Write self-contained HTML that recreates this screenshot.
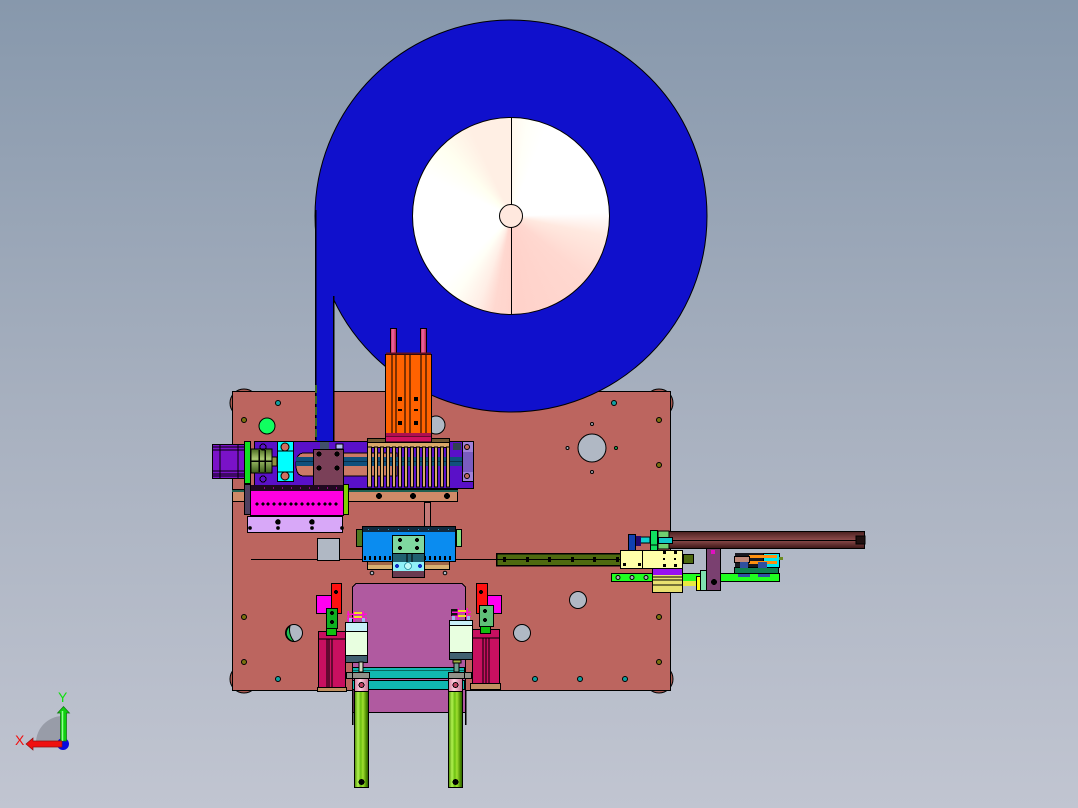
<!DOCTYPE html>
<html><head><meta charset="utf-8"><style>
html,body{margin:0;padding:0;width:1078px;height:808px;overflow:hidden}
svg{position:absolute;left:0;top:0}
</style></head><body>
<svg width="1078" height="808" viewBox="0 0 1078 808" shape-rendering="crispEdges" style="font-family:'Liberation Sans',sans-serif">
<defs>
<linearGradient id="bg" x1="0" y1="0" x2="0" y2="1"><stop offset="0" stop-color="#8798ac"/><stop offset=".5" stop-color="#a7b0bf"/><stop offset="1" stop-color="#c1c5d1"/></linearGradient>
<linearGradient id="tube" x1="0" y1="0" x2="0" y2="1"><stop offset="0" stop-color="#4a2020"/><stop offset=".5" stop-color="#8e4c4c"/><stop offset="1" stop-color="#3a1515"/></linearGradient>
<linearGradient id="gt" x1="0" y1="0" x2="1" y2="0"><stop offset="0" stop-color="#4a8a00"/><stop offset=".25" stop-color="#b0f050"/><stop offset=".45" stop-color="#6cc010"/><stop offset=".6" stop-color="#a0e030"/><stop offset=".85" stop-color="#4a8a00"/><stop offset="1" stop-color="#2a5a00"/></linearGradient>
<linearGradient id="cp" x1="0" y1="0" x2="0" y2="1"><stop offset="0" stop-color="#4a6a20"/><stop offset=".4" stop-color="#a8c870"/><stop offset="1" stop-color="#3a5a18"/></linearGradient>
<linearGradient id="pk" x1="0" y1="0" x2="1" y2="0"><stop offset="0" stop-color="#d880a0"/><stop offset=".4" stop-color="#ffd0e0"/><stop offset="1" stop-color="#c87090"/></linearGradient>
<linearGradient id="rd" x1="0" y1="0" x2="1" y2="0"><stop offset="0" stop-color="#c8205a"/><stop offset=".4" stop-color="#f070a0"/><stop offset="1" stop-color="#b01050"/></linearGradient>
</defs>
<rect width="1078" height="808" fill="url(#bg)"/>

<!-- feet -->
<g fill="#a85a52" stroke="#000" shape-rendering="auto"><circle cx="659" cy="403" r="14"/><circle cx="659" cy="679" r="14"/><circle cx="244" cy="403" r="14"/><circle cx="244" cy="679" r="14"/></g>
<!-- plate -->
<rect x="232.5" y="391.5" width="438" height="299" fill="#bc655f" stroke="#000"/>
<!-- plate holes -->
<g stroke="#000" fill="#b0b8c4" shape-rendering="auto">
<circle cx="592" cy="448" r="14"/><circle cx="578" cy="600" r="8.5"/><circle cx="522" cy="633" r="8.5"/><circle cx="294" cy="633" r="8.5"/><circle cx="436" cy="425" r="9"/>
<circle cx="267" cy="426" r="8" fill="#10ff60"/>
<circle cx="592" cy="424" r="1.5"/><circle cx="592" cy="472" r="1.5"/><circle cx="567.5" cy="448" r="1.5"/><circle cx="616" cy="448" r="1.5" fill="#20c060"/>
<path d="M290 626A8.5 8.5 0 0 0 294 641.5Q288 634 290 626Z" fill="#20c050"/>
<circle cx="372" cy="573" r="1.8"/><circle cx="445" cy="573" r="1.8"/>
</g>
<g stroke="#000" fill="#7a7010" shape-rendering="auto">
<circle cx="659" cy="420" r="2.5"/><circle cx="659" cy="465" r="2.5"/><circle cx="659" cy="617" r="2.5"/><circle cx="659" cy="662" r="2.5"/>
<circle cx="244" cy="420" r="2.5"/><circle cx="244" cy="617" r="2.5"/><circle cx="244" cy="662" r="2.5"/>
</g>
<g stroke="#000" fill="#10a0a0" shape-rendering="auto">
<circle cx="614" cy="403" r="2.5"/><circle cx="278" cy="403" r="2.5"/><circle cx="625" cy="679" r="2.5"/><circle cx="580" cy="679" r="2.5"/><circle cx="535" cy="679" r="2.5"/><circle cx="278" cy="679" r="2.5"/>
</g>
<line x1="251" y1="559.5" x2="497" y2="559.5" stroke="#000"/>

<!-- big disc -->
<circle cx="511" cy="216" r="196" fill="#1010cc" stroke="#000" shape-rendering="auto"/>
<!-- belt -->
<rect x="315.5" y="210" width="18" height="232" fill="#1010cc"/>
<path d="M315.5 210V442M333.5 296V442" stroke="#000" stroke-width="1.5" fill="none"/>
<path d="M316 385V470" stroke="#3a6a20" stroke-width="2" stroke-dasharray="8 3" fill="none"/>

<!-- inner disc -->
<foreignObject x="412" y="117" width="198" height="198">
<div xmlns="http://www.w3.org/1999/xhtml" style="width:196px;height:196px;border:1px solid #000;border-radius:50%;background:conic-gradient(from 0deg,#fff8ee 0deg,#fffff8 10deg,#fff 22deg,#fff 88deg,#ffe9e0 102deg,#ffd8d0 130deg,#ffd2ca 175deg,#ffd8d0 190deg,#ffeee6 200deg,#fffff6 215deg,#fff 225deg,#fff 295deg,#fffff0 315deg,#ffefe4 335deg,#ffefe4 360deg)"></div>
</foreignObject>
<path d="M511.5 118V314" stroke="#000"/>
<circle cx="511" cy="216" r="11.5" fill="#ffe8de" stroke="#000" shape-rendering="auto"/>

<!-- purple base -->
<rect x="254.5" y="441.5" width="219" height="47" fill="#5a10c8" stroke="#000"/>
<path d="M304 453H397V476H304Q296 476 296 465Q296 453 304 453Z" fill="#cc7a66" stroke="#000"/>
<rect x="296" y="457" width="166" height="9" fill="#10507c"/>
<path d="M296 461.5H462" stroke="#08304c"/>
<rect x="462.5" y="441.5" width="11" height="40" fill="#7a5cc0" stroke="#000"/>
<rect x="463" y="442" width="10" height="10" fill="#a080d8"/>
<rect x="463" y="472" width="10" height="9" fill="#a080d8"/>
<g stroke="#000" fill="#c06a60" shape-rendering="auto"><circle cx="467" cy="447" r="2.5"/><circle cx="467" cy="476" r="2.5"/></g>
<rect x="453" y="443" width="8" height="7" fill="#304050"/>
<!-- motor -->
<rect x="212.5" y="444.5" width="32" height="34" fill="#7a12c8" stroke="#000"/>
<path d="M212 447H244M212 450H244M212 471H244M212 474H244M212 476H244M220 444V478M238 444V478" stroke="#000" fill="none"/>
<rect x="244.5" y="441.5" width="6" height="42" fill="#10e020" stroke="#000"/>
<rect x="251" y="449" width="21" height="24" fill="url(#cp)" stroke="#000"/>
<path d="M259 450V472M265 450V472M251 461H272" stroke="#000" stroke-width="1.5"/>
<rect x="272" y="457" width="5" height="9" fill="#909040" stroke="#000"/>
<circle cx="263" cy="447" r="3" fill="none" stroke="#000"/><circle cx="263" cy="479" r="3" fill="none" stroke="#000"/>
<!-- cyan block -->
<rect x="277.5" y="441.5" width="16" height="40" fill="#00ffff" stroke="#000"/>
<g stroke="#000" fill="#d07060" shape-rendering="auto"><circle cx="285" cy="447" r="4"/><circle cx="285" cy="476" r="4"/></g>
<path d="M277 451H293M277 472H293" stroke="#000"/>
<!-- brown block -->
<rect x="313.5" y="449.5" width="30" height="37" fill="#7a4058" stroke="#000"/>
<g fill="#000"><circle cx="319" cy="454" r="2.5"/><circle cx="337" cy="454" r="2.5"/><circle cx="319" cy="468" r="2.5"/><circle cx="337" cy="468" r="2.5"/></g>
<rect x="336" y="444" width="7" height="5" fill="#b0b8f0" stroke="#000"/>
<rect x="320" y="442" width="9" height="7" fill="#40506a"/>

<!-- orange cylinder -->
<rect x="390.5" y="328.5" width="6" height="27" fill="url(#rd)" stroke="#000"/>
<rect x="420.5" y="328.5" width="6" height="27" fill="url(#rd)" stroke="#000"/>
<rect x="385.5" y="354.5" width="46" height="81" fill="#ff6200" stroke="#000"/>
<path d="M392 355V435M396 355V435M405 355V435M410 355V435M421 355V435M426 355V435" stroke="#000"/>
<path d="M386 353.5H431" stroke="#601020" stroke-width="2"/>
<g fill="#000"><rect x="398" y="397" width="4" height="4"/><rect x="414" y="397" width="4" height="4"/><rect x="398" y="409" width="4" height="2"/><rect x="414" y="409" width="4" height="2"/><rect x="398" y="421" width="4" height="4"/><rect x="414" y="421" width="4" height="4"/></g>
<!-- comb -->
<rect x="367.5" y="438.5" width="82" height="4" fill="#705830" stroke="#000"/>
<rect x="367.5" y="442.5" width="82" height="5" fill="#d8a868" stroke="#000"/>
<g fill="#d8a868" stroke="#000">
<rect x="367.5" y="447" width="4" height="40"/><rect x="374.5" y="447" width="3" height="40"/><rect x="380.5" y="447" width="3" height="40"/><rect x="386.5" y="447" width="3" height="40"/><rect x="392.5" y="447" width="3" height="40"/><rect x="398.5" y="447" width="3" height="40"/><rect x="404.5" y="447" width="3" height="40"/><rect x="410.5" y="447" width="3" height="40"/><rect x="416.5" y="447" width="3" height="40"/><rect x="422.5" y="447" width="3" height="40"/><rect x="428.5" y="447" width="3" height="40"/><rect x="434.5" y="447" width="3" height="40"/><rect x="440.5" y="447" width="3" height="40"/><rect x="446.5" y="447" width="3" height="40"/>
</g>
<rect x="385.5" y="436" width="46" height="6" fill="#d01060" stroke="#000"/>
<rect x="386" y="433" width="45" height="3" fill="#b01050"/>

<!-- salmon bar -->
<rect x="232.5" y="489.5" width="225" height="12" fill="#d08a68" stroke="#000"/>
<path d="M232 491H458" stroke="#206050" stroke-width="2"/>
<g fill="#000"><circle cx="379" cy="496" r="3"/><circle cx="413" cy="496" r="3"/><circle cx="447" cy="496" r="3"/></g>
<!-- magenta -->
<rect x="250.5" y="485.5" width="93" height="30" fill="#ff00e0" stroke="#000"/>
<rect x="250" y="485" width="93" height="6" fill="#200820"/>
<path d="M264 488H340" stroke="#ff00e0" stroke-dasharray="1 8"/>
<g fill="#000"><circle cx="257" cy="504" r="1.5"/><circle cx="263" cy="504" r="1.5"/><circle cx="268" cy="504" r="1.5"/><circle cx="274" cy="504" r="1.5"/><circle cx="280" cy="504" r="1.5"/><circle cx="285" cy="504" r="1.5"/><circle cx="291" cy="504" r="1.5"/><circle cx="296" cy="504" r="1.5"/><circle cx="302" cy="504" r="1.5"/><circle cx="308" cy="504" r="1.5"/><circle cx="313" cy="504" r="1.5"/><circle cx="319" cy="504" r="1.5"/><circle cx="325" cy="504" r="1.5"/><circle cx="330" cy="504" r="1.5"/><circle cx="336" cy="504" r="1.5"/></g>
<rect x="244.5" y="484.5" width="6" height="30" fill="#504060" stroke="#000"/>
<rect x="343.5" y="484.5" width="5" height="30" fill="#80d000" stroke="#000"/>
<rect x="247.5" y="516.5" width="95" height="16" fill="#d8a8f8" stroke="#000"/>
<g fill="#000"><circle cx="278" cy="522" r="2.8"/><circle cx="312" cy="522" r="2.8"/><circle cx="278" cy="528" r="1.8"/><circle cx="312" cy="528" r="1.8"/><circle cx="250" cy="528" r="1.8"/><circle cx="342" cy="528" r="1.8"/></g>

<!-- stem and blue block -->
<rect x="424.5" y="502.5" width="6" height="25" fill="#c47a78" stroke="#000"/>
<rect x="356.5" y="529.5" width="6" height="17" fill="#4e7a20" stroke="#000"/>
<rect x="456.5" y="529.5" width="5" height="17" fill="#80e080" stroke="#000"/>
<rect x="362.5" y="526.5" width="93" height="35" fill="#0a8cf0" stroke="#000"/>
<rect x="363" y="527" width="92" height="5" fill="#102a40"/>
<path d="M368 529.5H452" stroke="#10a0c0" stroke-dasharray="1 9"/>
<rect x="363" y="556" width="92" height="4" fill="#0a8cf0"/>
<path d="M364 558H454" stroke="#000" stroke-width="4" stroke-dasharray="2 3"/>
<rect x="367.5" y="561.5" width="82" height="8" fill="#d8b070" stroke="#000"/>
<rect x="368" y="562" width="81" height="3" fill="#a06848"/>
<rect x="392.5" y="535.5" width="32" height="18" fill="#7fd8a0" stroke="#000"/>
<g fill="#000"><circle cx="400" cy="540" r="2"/><circle cx="417" cy="540" r="2"/><circle cx="400" cy="548" r="2"/><circle cx="417" cy="548" r="2"/></g>
<rect x="392.5" y="553.5" width="32" height="24" fill="#90f0f8" stroke="#000"/>
<rect x="393" y="554" width="31" height="8" fill="#206070"/>
<path d="M407 553V562M412 553V562" stroke="#000"/>
<rect x="393" y="571" width="31" height="6" fill="#6a3a50"/>
<g fill="#1030c0"><circle cx="397" cy="566" r="2"/><circle cx="420" cy="566" r="2"/></g>
<circle cx="408" cy="566" r="3.5" fill="#c0f8f8" stroke="#40a0b0"/>
<rect x="317.5" y="538.5" width="22" height="22" fill="#b0b8c4" stroke="#000"/>

<!-- right assembly -->
<rect x="496.5" y="553.5" width="124" height="12" fill="#4e6a10" stroke="#000" stroke-width="1.5"/>
<path d="M497 559.5H620" stroke="#000"/>
<g fill="#000"><rect x="503" y="557" width="3" height="5"/><rect x="526" y="557" width="3" height="5"/><rect x="548" y="557" width="3" height="5"/><rect x="571" y="557" width="3" height="5"/><rect x="593" y="557" width="3" height="5"/><rect x="616" y="557" width="3" height="5"/></g>
<rect x="683.5" y="554.5" width="10" height="9" fill="#4e6a10" stroke="#000"/>
<rect x="668.5" y="531.5" width="196" height="17" fill="url(#tube)" stroke="#000"/>
<path d="M668 540.5H864" stroke="#000"/>
<rect x="856" y="536" width="9" height="8" fill="#201010" stroke="#000"/>
<rect x="658" y="531" width="11" height="18" fill="#70d070" stroke="#000"/>
<rect x="640" y="537" width="10" height="6" fill="#10d0d0" stroke="#000"/>
<rect x="635" y="536" width="6" height="10" fill="#200870"/>
<rect x="658.5" y="537.5" width="14" height="6" fill="#10c8c8" stroke="#000"/>
<rect x="650.5" y="530.5" width="7" height="20" fill="#10e060" stroke="#000"/>
<path d="M651 545H657" stroke="#000"/>
<rect x="628.5" y="534.5" width="7" height="17" fill="#1040b0" stroke="#000"/>
<rect x="620.5" y="550.5" width="62" height="18" fill="#ffffa8" stroke="#000"/>
<path d="M642.5 550V569" stroke="#000"/>
<g fill="#000"><rect x="663" y="551" width="3" height="3"/><rect x="674" y="551" width="3" height="3"/><rect x="663" y="558" width="2" height="2"/><rect x="674" y="558" width="2" height="2"/><rect x="663" y="564" width="3" height="3"/><rect x="674" y="564" width="3" height="3"/><rect x="623" y="563" width="3" height="3"/><rect x="638" y="563" width="3" height="3"/></g>
<rect x="611.5" y="573.5" width="168" height="8" fill="#20ff20" stroke="#000"/>
<g fill="#b0b8c0" stroke="#000" shape-rendering="auto"><circle cx="618" cy="577.5" r="2"/><circle cx="632" cy="577.5" r="2"/><circle cx="646" cy="577.5" r="2"/></g>
<rect x="652.5" y="569.5" width="30" height="23" fill="#e8e070" stroke="#000"/>
<rect x="653" y="569" width="29" height="6" fill="#9810f0"/>
<path d="M653 577H682M653 580H682M653 585H682" stroke="#000"/>
<rect x="683" y="581" width="14" height="5" fill="#e8e840"/>
<rect x="696.5" y="576.5" width="5" height="14" fill="#ffff10" stroke="#000"/>
<rect x="700.5" y="570.5" width="6" height="20" fill="#80e0b0" stroke="#000"/>
<rect x="706.5" y="548.5" width="14" height="42" fill="#7a4070" stroke="#000"/>
<rect x="711" y="550" width="4" height="4" fill="#e010c0"/>
<circle cx="714" cy="582" r="3" fill="#000"/>
<rect x="763.5" y="553.5" width="16" height="14" fill="#00e8f0" stroke="#000"/>
<rect x="735" y="553" width="28" height="14" fill="#181820"/>
<rect x="749" y="555" width="28" height="3" fill="#ff9010"/>
<rect x="749" y="561" width="28" height="3" fill="#ff9010"/>
<rect x="734.5" y="556.5" width="15" height="6" fill="#c08878" stroke="#000"/>
<rect x="779" y="557" width="4" height="3" fill="#6a8a20"/>
<rect x="734.5" y="567.5" width="44" height="6" fill="#108050" stroke="#000"/>
<rect x="740" y="562" width="8" height="6" fill="#3050a0"/>
<rect x="758" y="562" width="9" height="6" fill="#3050a0"/>
<rect x="738" y="574" width="12" height="3" fill="#3050a0"/>
<rect x="758" y="574" width="12" height="3" fill="#3050a0"/>

<!-- lower centre -->
<path d="M356 583.5H462L465.5 587V712.5H352.5V587Z" fill="#b05aa0" stroke="#000"/>
<rect x="352.5" y="667.5" width="112" height="11" fill="#10b8b0" stroke="#000"/>
<rect x="352.5" y="680.5" width="112" height="9" fill="#10b8b0" stroke="#000"/>
<path d="M353 670.5H464" stroke="#086860"/>
<path d="M352.5 690V725M465.5 690V725" stroke="#000" stroke-width="1.5"/>

<!-- left stack -->
<rect x="316.5" y="595.5" width="16" height="18" fill="#ff00f0" stroke="#000"/>
<rect x="331.5" y="583.5" width="10" height="30" fill="#ff1010" stroke="#000"/>
<rect x="318.5" y="631.5" width="27" height="56" fill="#c81060" stroke="#000"/>
<path d="M318 639H346M327 639V687M329 639V687M332 639V687" stroke="#000"/>
<rect x="317.5" y="687.5" width="29" height="4" fill="#c09060" stroke="#000"/>
<rect x="326.5" y="608.5" width="11" height="20" fill="#10b020" stroke="#000"/>
<rect x="326.5" y="628.5" width="10" height="7" fill="#10c010" stroke="#000"/>
<g fill="#000"><circle cx="332" cy="613" r="2"/><circle cx="332" cy="622" r="2"/><circle cx="336" cy="592" r="2"/></g>
<path d="M347 614H367M347 618H367M348 611V622M354 611V622M363 611V622" stroke="#ff10d0" stroke-width="1.5"/>
<path d="M354 613H362M354 617H362" stroke="#f0e020" stroke-width="2"/>
<rect x="349" y="618" width="3" height="12" fill="#a0b8f0"/><rect x="362" y="618" width="3" height="12" fill="#a0b8f0"/>
<rect x="345.5" y="622.5" width="22" height="9" fill="#c8f0f8" stroke="#000"/>
<rect x="353" y="631" width="7" height="2" fill="#10d080"/>
<rect x="345.5" y="631.5" width="22" height="24" fill="#e8ffe0" stroke="#000"/>
<rect x="345.5" y="655.5" width="22" height="7" fill="#406070" stroke="#000"/>
<rect x="359" y="662" width="4" height="10" fill="#d0d8c0" stroke="#000"/>

<!-- right stack -->
<rect x="487.5" y="595.5" width="14" height="18" fill="#ff00f0" stroke="#000"/>
<rect x="476.5" y="583.5" width="11" height="30" fill="#ff1010" stroke="#000"/>
<rect x="472.5" y="629.5" width="27" height="54" fill="#c81060" stroke="#000"/>
<path d="M472 638H500M483 638V683M486 638V683M489 638V683" stroke="#000"/>
<rect x="470.5" y="683.5" width="30" height="6" fill="#c09060" stroke="#000"/>
<rect x="479.5" y="605.5" width="14" height="21" fill="#60c078" stroke="#000"/>
<rect x="480.5" y="626.5" width="10" height="7" fill="#10c010" stroke="#000"/>
<g fill="#000"><circle cx="485" cy="611" r="2"/><circle cx="485" cy="620" r="2"/><circle cx="481" cy="592" r="2"/></g>
<rect x="451" y="609" width="7" height="7" fill="#101010"/>
<path d="M452 612H471M452 616H471M458 608V620M467 608V620" stroke="#ff10d0" stroke-width="1.5"/>
<path d="M458 611H466M458 616H466" stroke="#f0e020" stroke-width="2"/>
<rect x="452" y="616" width="3" height="9" fill="#a0b8f0"/><rect x="467" y="616" width="3" height="9" fill="#a0b8f0"/>
<rect x="449.5" y="620.5" width="23" height="5" fill="#c8f0f8" stroke="#000"/>
<rect x="449.5" y="625.5" width="23" height="27" fill="#e8ffe0" stroke="#000"/>
<rect x="449.5" y="652.5" width="23" height="7" fill="#406070" stroke="#000"/>
<rect x="453" y="660" width="8" height="3" fill="#a0b040" stroke="#000"/>
<rect x="454" y="663" width="5" height="9" fill="#70a090" stroke="#000"/>

<!-- tubes -->
<rect x="346.5" y="672.5" width="23" height="6" fill="#909088" stroke="#000"/>
<rect x="448.5" y="672.5" width="23" height="6" fill="#909088" stroke="#000"/>
<path d="M352.5 672V678M464.5 672V678" stroke="#000"/>
<rect x="354.5" y="678.5" width="14" height="13" fill="url(#pk)" stroke="#000"/>
<rect x="448.5" y="678.5" width="14" height="13" fill="url(#pk)" stroke="#000"/>
<circle cx="361.5" cy="685" r="2.5" fill="#c04060" stroke="#000"/>
<circle cx="455.5" cy="685" r="2.5" fill="#c04060" stroke="#000"/>
<rect x="354.5" y="691.5" width="14" height="96" fill="url(#gt)" stroke="#000"/>
<rect x="448.5" y="691.5" width="14" height="96" fill="url(#gt)" stroke="#000"/>
<circle cx="361.5" cy="782" r="3" fill="#000"/>
<circle cx="455.5" cy="782" r="3" fill="#000"/>

<!-- triad -->
<g shape-rendering="auto">
<path d="M62 743V716A27 27 0 0 0 36 743Z" fill="#989ca8"/>
<circle cx="63" cy="744" r="6" fill="#0808e0"/>
<path d="M60.5 741V713H57.5L63.5 706.5L69.5 713H66.5V741Z" fill="#10d010" stroke="#107010" stroke-width=".7"/>
<path d="M62.5 711V741" stroke="#90ff90" stroke-width="1.5"/>
<path d="M62 741H33V738L26 744L33 750V747H62Z" fill="#f01010" stroke="#901010" stroke-width=".7"/>
<text x="58" y="702" font-size="14" fill="#10e010">Y</text>
<text x="15" y="745" font-size="14" fill="#f01010">X</text>
</g>
</svg>
</body></html>
